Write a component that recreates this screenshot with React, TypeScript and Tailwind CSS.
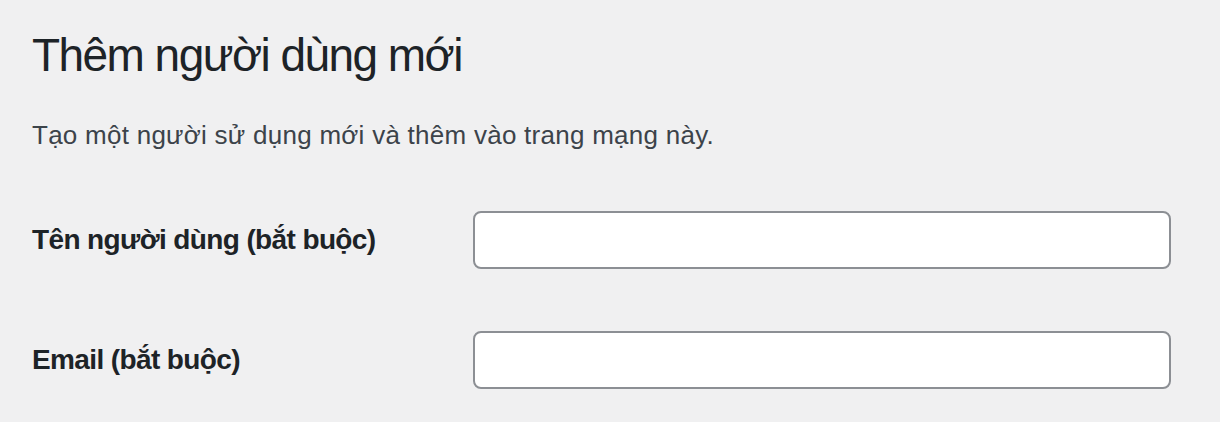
import React from "react";

export default function App() {
  return (
    <div
      className="w-[1220px] h-[422px] overflow-hidden bg-[#f0f0f1] pl-[32px] pt-[25px]"
      style={{ fontFamily: '"Liberation Sans", Arial, sans-serif' }}
    >
      <h1 className="text-[46px] leading-[60px] font-normal tracking-[-1.55px] text-[#1d2327]">
        Thêm người dùng mới
      </h1>
      <p className="mt-[31px] text-[26px] leading-[39px] tracking-[0.26px] text-[#3c434a]">
        Tạo một người sử dụng mới và thêm vào trang mạng này.
      </p>
      <div className="mt-[25px] flex flex-col">
        <div className="flex h-[120px] items-center">
          <label className="w-[441px] shrink-0 text-[28px] font-bold tracking-[-0.62px] text-[#1d2327]">
            Tên người dùng (bắt buộc)
          </label>
          <input
            type="text"
            className="h-[58px] w-[698px] rounded-[8px] border-2 border-[#8c8f94] bg-white outline-none"
          />
        </div>
        <div className="flex h-[120px] items-center">
          <label className="w-[441px] shrink-0 text-[28px] font-bold tracking-[-0.62px] text-[#1d2327]">
            Email (bắt buộc)
          </label>
          <input
            type="email"
            className="h-[58px] w-[698px] rounded-[8px] border-2 border-[#8c8f94] bg-white outline-none"
          />
        </div>
      </div>
    </div>
  );
}
